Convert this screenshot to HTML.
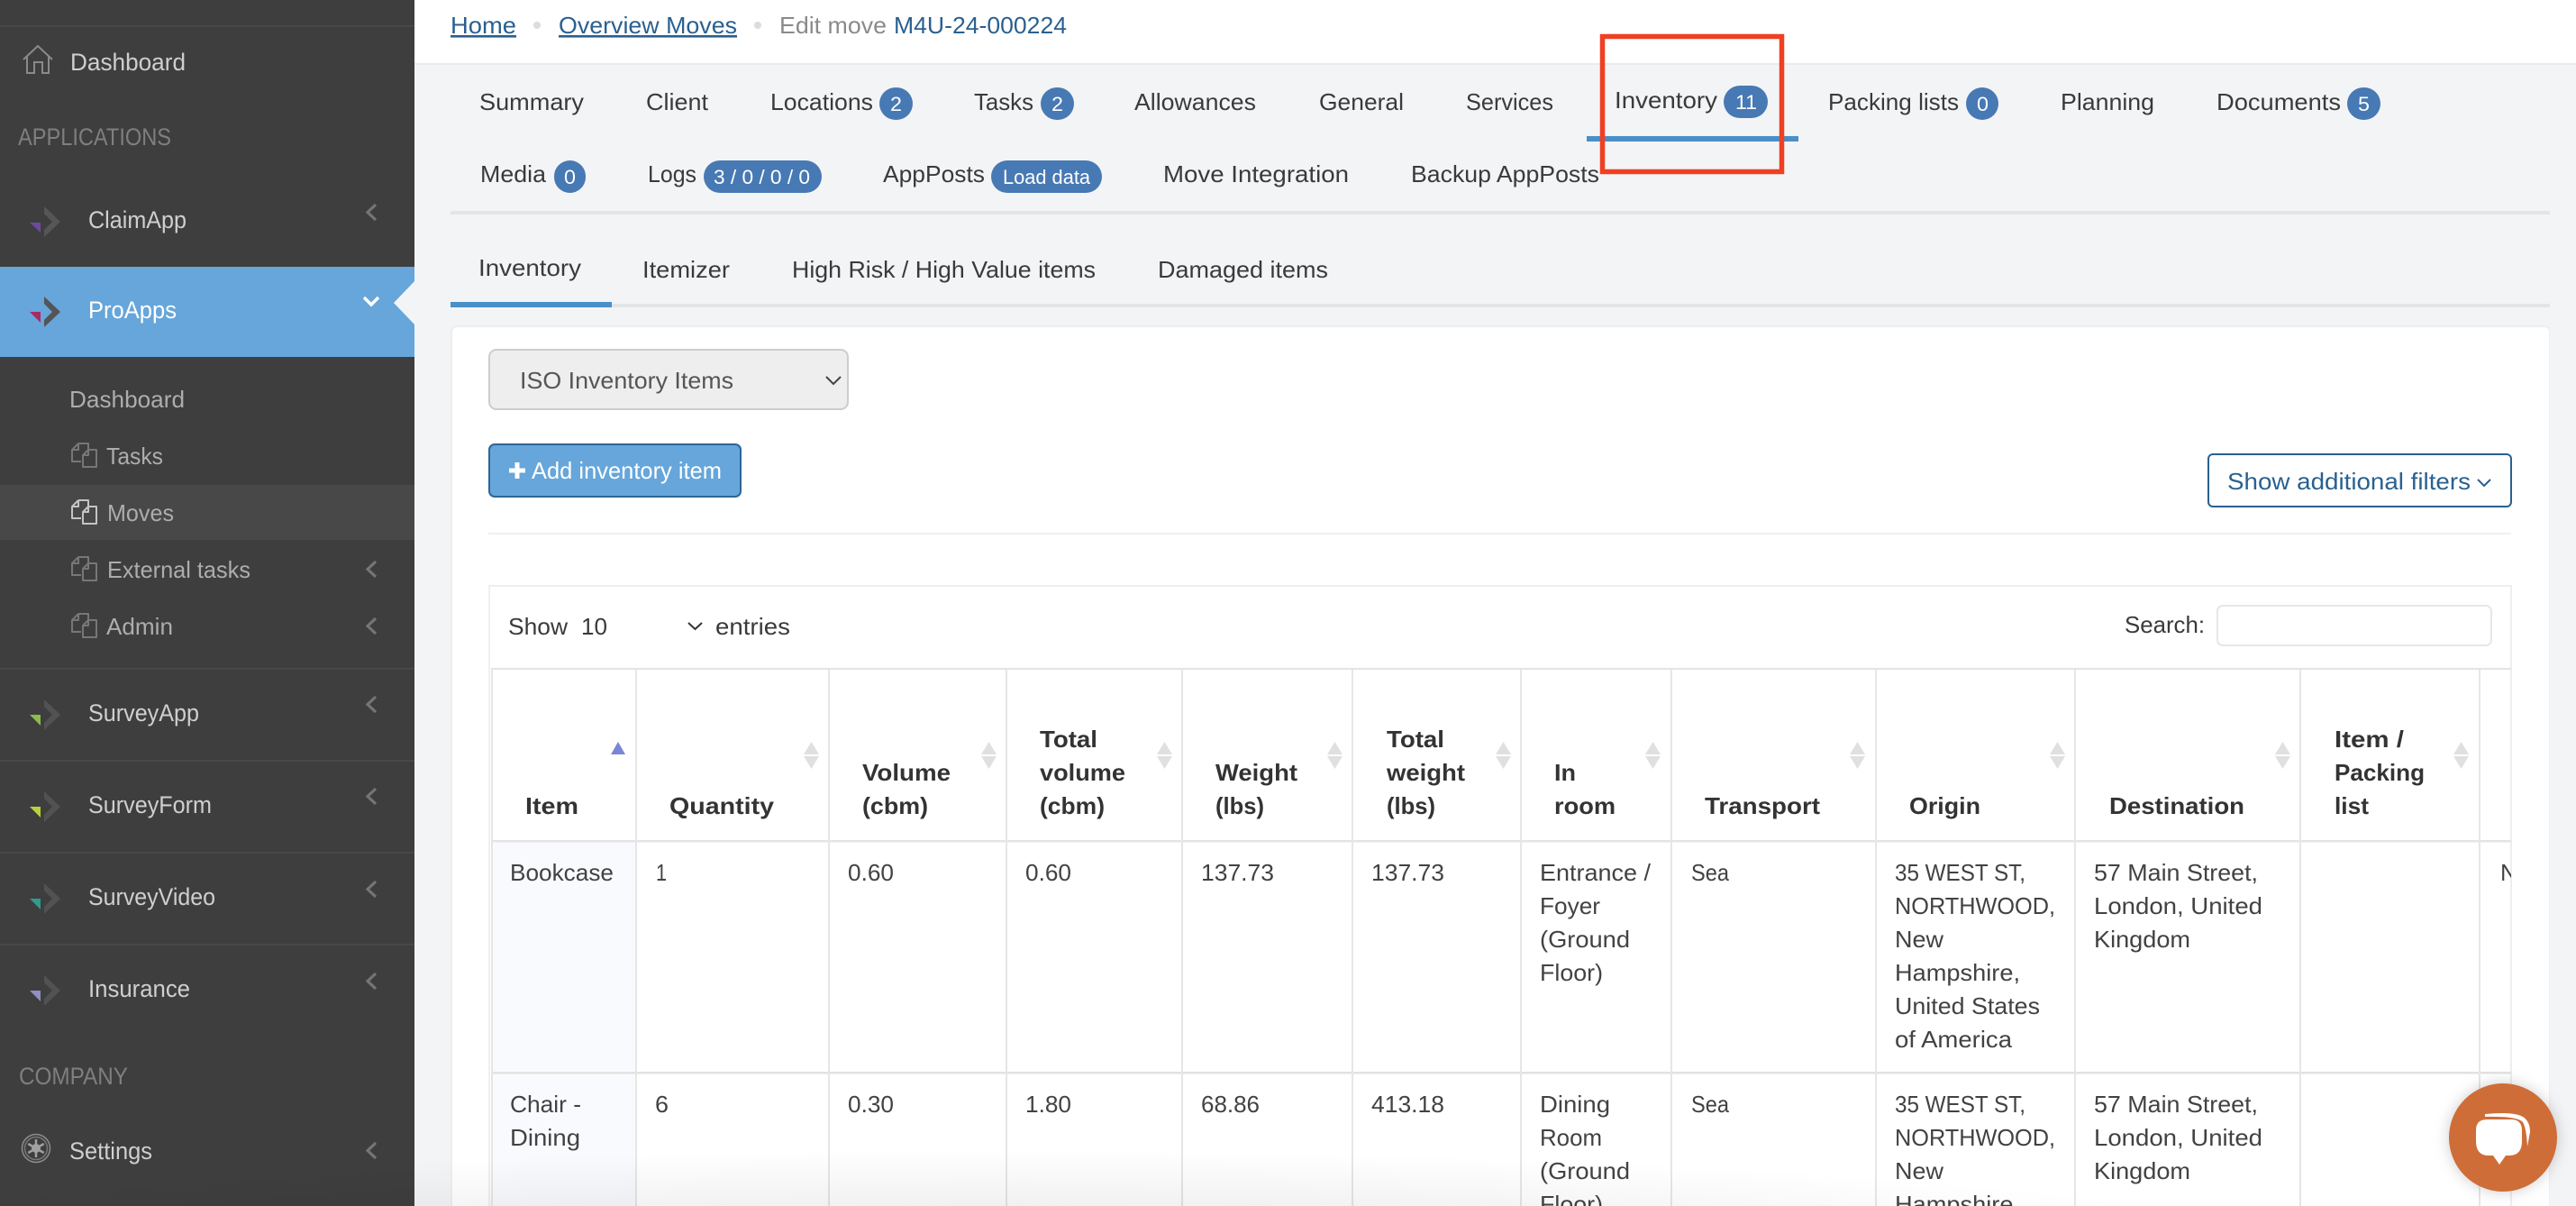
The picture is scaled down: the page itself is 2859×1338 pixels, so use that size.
<!DOCTYPE html>
<html lang="en">
<head>
<meta charset="utf-8">
<title>Edit move</title>
<style>
html,body{margin:0;padding:0;background:#f3f4f6;width:2859px;height:1338px;overflow:hidden}
svg{display:block;position:absolute;left:0;top:0}
text{font-family:"Liberation Sans",sans-serif;font-size:26px;fill:#3a3a3a;white-space:pre}
.sb{font-size:27px;fill:#cfcfcf}
.sub{font-size:26px;fill:#adadad}
.cap{font-size:27px;fill:#7f7f7f}
.lnk{fill:#2a6090}
.bd{font-size:22px;fill:#fff}
.th{font-weight:700;fill:#333;font-size:26px}
.td{fill:#424242}
</style>
</head>
<body>
<svg width="2859" height="1338" viewBox="0 0 2859 1338" xmlns="http://www.w3.org/2000/svg">
<defs>
<g id="doc" fill="none" stroke-width="2" stroke-linejoin="round"><path d="M8 1H19V8M8 1L1 8V21H11M8 1V8H1"/><path d="M19 8H28V27H13V14L19 8ZM19 8V14H13"/></g>
<polyline id="cl" points="11,1 2,9.5 11,18" fill="none" stroke="#757575" stroke-width="3.2"/>
<polygon id="ar" points="49,0 67,17 49,34 49,26 58,17 49,8"/>
<g id="so"><polygon points="8.5,0 17,14 0,14" fill="#e0e0e0"/><polygon points="0,16 17,16 8.5,30" fill="#e0e0e0"/></g>
<radialGradient id="fade" gradientUnits="userSpaceOnUse" cx="0" cy="0" r="1" gradientTransform="translate(1100 1400) scale(1500 125)"><stop offset="0" stop-color="#000" stop-opacity=".11"/><stop offset=".45" stop-color="#000" stop-opacity=".06"/><stop offset="1" stop-color="#000" stop-opacity="0"/></radialGradient>
<clipPath id="tc"><rect x="542" y="650" width="2245" height="688"/></clipPath>
</defs>

<!-- main background -->
<rect width="2859" height="1338" fill="#f3f4f6"/>
<rect x="460" y="0" width="2399" height="70" fill="#fff"/>
<rect x="460" y="70" width="2399" height="2" fill="#e9ebee"/>

<!-- breadcrumb -->
<text x="500" y="37" textLength="73" lengthAdjust="spacingAndGlyphs" class="lnk" text-decoration="underline">Home</text>
<circle cx="596" cy="28" r="4" fill="#dcdcdc"/>
<text x="620" y="37" textLength="198" lengthAdjust="spacingAndGlyphs" class="lnk" text-decoration="underline">Overview Moves</text>
<circle cx="841" cy="28" r="4" fill="#dcdcdc"/>
<text x="865" y="37" textLength="119" lengthAdjust="spacingAndGlyphs" style="fill:#8a8a8a">Edit move</text>
<text x="992" y="37" textLength="192" lengthAdjust="spacingAndGlyphs" class="lnk">M4U-24-000224</text>

<!-- tabs row 1 -->
<text x="532" y="122" textLength="116" lengthAdjust="spacingAndGlyphs">Summary</text>
<text x="717" y="122" textLength="69" lengthAdjust="spacingAndGlyphs">Client</text>
<text x="855" y="122" textLength="114" lengthAdjust="spacingAndGlyphs">Locations</text>
<rect x="976" y="97" width="37" height="36" rx="18" fill="#4779b4"/>
<text x="988" y="123" class="bd" textLength="13" lengthAdjust="spacingAndGlyphs">2</text>
<text x="1081" y="122" textLength="66" lengthAdjust="spacingAndGlyphs">Tasks</text>
<rect x="1155" y="97" width="37" height="36" rx="18" fill="#4779b4"/>
<text x="1167" y="123" class="bd" textLength="13" lengthAdjust="spacingAndGlyphs">2</text>
<text x="1259" y="122" textLength="135" lengthAdjust="spacingAndGlyphs">Allowances</text>
<text x="1464" y="122" textLength="94" lengthAdjust="spacingAndGlyphs">General</text>
<text x="1627" y="122" textLength="97" lengthAdjust="spacingAndGlyphs">Services</text>
<text x="1792" y="120" textLength="114" lengthAdjust="spacingAndGlyphs">Inventory</text>
<rect x="1913" y="95" width="49" height="36" rx="18" fill="#4779b4"/>
<text x="1926" y="121" class="bd" textLength="24" lengthAdjust="spacingAndGlyphs">11</text>
<rect x="1761" y="151" width="235" height="6" fill="#4a8fc7"/>
<text x="2029" y="122" textLength="145" lengthAdjust="spacingAndGlyphs">Packing lists</text>
<rect x="2182" y="97" width="36" height="36" rx="18" fill="#4779b4"/>
<text x="2194" y="123" class="bd" textLength="13" lengthAdjust="spacingAndGlyphs">0</text>
<text x="2287" y="122" textLength="104" lengthAdjust="spacingAndGlyphs">Planning</text>
<text x="2460" y="122" textLength="138" lengthAdjust="spacingAndGlyphs">Documents</text>
<rect x="2605" y="97" width="37" height="36" rx="18" fill="#4779b4"/>
<text x="2617" y="123" class="bd" textLength="13" lengthAdjust="spacingAndGlyphs">5</text>

<!-- tabs row 2 -->
<text x="533" y="202" textLength="73" lengthAdjust="spacingAndGlyphs">Media</text>
<rect x="615" y="178" width="35" height="36" rx="17.5" fill="#4779b4"/>
<text x="626" y="204" class="bd" textLength="13" lengthAdjust="spacingAndGlyphs">0</text>
<text x="719" y="202" textLength="54" lengthAdjust="spacingAndGlyphs">Logs</text>
<rect x="781" y="178" width="131" height="36" rx="18" fill="#4779b4"/>
<text x="792" y="204" class="bd" textLength="107" lengthAdjust="spacingAndGlyphs">3 / 0 / 0 / 0</text>
<text x="980" y="202" textLength="113" lengthAdjust="spacingAndGlyphs">AppPosts</text>
<rect x="1100" y="178" width="123" height="36" rx="18" fill="#4779b4"/>
<text x="1113" y="204" class="bd" textLength="97" lengthAdjust="spacingAndGlyphs">Load data</text>
<text x="1291" y="202" textLength="206" lengthAdjust="spacingAndGlyphs">Move Integration</text>
<text x="1566" y="202" textLength="209" lengthAdjust="spacingAndGlyphs">Backup AppPosts</text>
<rect x="500" y="234" width="2330" height="4" fill="#e4e5e8"/>

<!-- subtabs -->
<text x="531" y="306" textLength="114" lengthAdjust="spacingAndGlyphs">Inventory</text>
<text x="713" y="308" textLength="97" lengthAdjust="spacingAndGlyphs">Itemizer</text>
<text x="879" y="308" textLength="337" lengthAdjust="spacingAndGlyphs">High Risk / High Value items</text>
<text x="1285" y="308" textLength="189" lengthAdjust="spacingAndGlyphs">Damaged items</text>
<rect x="500" y="337" width="2330" height="4" fill="#e2e5e6"/>
<rect x="500" y="335" width="179" height="6" fill="#4a8fc7"/>

<!-- card -->
<path d="M500 1338V368Q500 361 507 361H2823Q2830 361 2830 368V1338Z" fill="#eceef1"/>
<path d="M502 1338V369Q502 363 508 363H2823Q2829 363 2829 369V1338Z" fill="#fff"/>

<!-- select -->
<rect x="543" y="388" width="398" height="66" rx="8" fill="#eeeeee" stroke="#cdcdcd" stroke-width="2"/>
<text x="577" y="431" textLength="237" lengthAdjust="spacingAndGlyphs" style="fill:#555">ISO Inventory Items</text>
<polyline points="917,418 925,426 933,418" fill="none" stroke="#444" stroke-width="2"/>

<!-- add button -->
<rect x="543" y="493" width="279" height="58" rx="6" fill="#66a6da" stroke="#2f6596" stroke-width="2"/>
<path d="M565 522H583M574 513V531" stroke="#fff" stroke-width="5" fill="none"/>
<text x="590" y="531" textLength="211" lengthAdjust="spacingAndGlyphs" style="fill:#fff">Add inventory item</text>

<!-- filters button -->
<rect x="2451" y="504" width="336" height="58" rx="5" fill="#fff" stroke="#2a6090" stroke-width="2"/>
<text x="2472" y="543" textLength="270" lengthAdjust="spacingAndGlyphs" class="lnk">Show additional filters</text>
<polyline points="2750,532 2757,539 2764,532" fill="none" stroke="#2a6090" stroke-width="2"/>

<rect x="542" y="591" width="2245" height="2" fill="#eff0f3"/>

<!-- table wrapper -->
<rect x="542" y="649" width="2245" height="2" fill="#eceef1"/>
<rect x="542" y="649" width="2" height="689" fill="#eef0f3"/>
<rect x="2786" y="649" width="2" height="689" fill="#eceef1"/>
<text x="564" y="704" textLength="66" lengthAdjust="spacingAndGlyphs">Show</text>
<text x="645" y="704" textLength="29" lengthAdjust="spacingAndGlyphs">10</text>
<polyline points="764,691 771.500,698 779,691" fill="none" stroke="#333" stroke-width="2"/>
<text x="794" y="704" textLength="83" lengthAdjust="spacingAndGlyphs">entries</text>
<text x="2358" y="702" textLength="89" lengthAdjust="spacingAndGlyphs">Search:</text>
<rect x="2461" y="672" width="304" height="44" rx="6" fill="#fff" stroke="#e5e7ea" stroke-width="2"/>

<!-- table -->
<g clip-path="url(#tc)">
<rect x="546" y="934" width="160" height="404" fill="#f9fafd"/>
<rect x="545" y="741" width="2242" height="2" fill="#e4e4e4"/>
<rect x="545" y="932" width="2242" height="2.500" fill="#e4e4e4"/>
<rect x="545" y="1189" width="2242" height="2.500" fill="#e2e2e2"/>
<g fill="#e6e6e6">
<rect x="545" y="743" width="2" height="595"/><rect x="705" y="743" width="2" height="595"/><rect x="919" y="743" width="2" height="595"/><rect x="1116" y="743" width="2" height="595"/><rect x="1311" y="743" width="2" height="595"/><rect x="1500" y="743" width="2" height="595"/><rect x="1687" y="743" width="2" height="595"/><rect x="1854" y="743" width="2" height="595"/><rect x="2081" y="743" width="2" height="595"/><rect x="2302" y="743" width="2" height="595"/><rect x="2552" y="743" width="2" height="595"/><rect x="2751" y="743" width="2" height="595"/>
</g>

<!-- header -->
<text class="th" x="583" y="903" textLength="59" lengthAdjust="spacingAndGlyphs">Item</text>
<text class="th" x="743" y="903" textLength="116" lengthAdjust="spacingAndGlyphs">Quantity</text>
<text class="th" x="957" y="866" textLength="98" lengthAdjust="spacingAndGlyphs">Volume</text>
<text class="th" x="957" y="903" textLength="73" lengthAdjust="spacingAndGlyphs">(cbm)</text>
<text class="th" x="1154" y="829" textLength="64" lengthAdjust="spacingAndGlyphs">Total</text>
<text class="th" x="1154" y="866" textLength="95" lengthAdjust="spacingAndGlyphs">volume</text>
<text class="th" x="1154" y="903" textLength="72" lengthAdjust="spacingAndGlyphs">(cbm)</text>
<text class="th" x="1349" y="866" textLength="91" lengthAdjust="spacingAndGlyphs">Weight</text>
<text class="th" x="1349" y="903" textLength="54" lengthAdjust="spacingAndGlyphs">(lbs)</text>
<text class="th" x="1539" y="829" textLength="64" lengthAdjust="spacingAndGlyphs">Total</text>
<text class="th" x="1539" y="866" textLength="87" lengthAdjust="spacingAndGlyphs">weight</text>
<text class="th" x="1539" y="903" textLength="54" lengthAdjust="spacingAndGlyphs">(lbs)</text>
<text class="th" x="1725" y="866" textLength="24" lengthAdjust="spacingAndGlyphs">In</text>
<text class="th" x="1725" y="903" textLength="68" lengthAdjust="spacingAndGlyphs">room</text>
<text class="th" x="1892" y="903" textLength="128" lengthAdjust="spacingAndGlyphs">Transport</text>
<text class="th" x="2119" y="903" textLength="79" lengthAdjust="spacingAndGlyphs">Origin</text>
<text class="th" x="2341" y="903" textLength="150" lengthAdjust="spacingAndGlyphs">Destination</text>
<text class="th" x="2591" y="829" textLength="77" lengthAdjust="spacingAndGlyphs">Item /</text>
<text class="th" x="2591" y="866" textLength="100" lengthAdjust="spacingAndGlyphs">Packing</text>
<text class="th" x="2591" y="903" textLength="38" lengthAdjust="spacingAndGlyphs">list</text>

<!-- sort arrows -->
<polygon points="686,823 694,837 678,837" fill="#7b85d6"/>
<use href="#so" x="892" y="823"/><use href="#so" x="1089" y="823"/><use href="#so" x="1284" y="823"/><use href="#so" x="1473" y="823"/><use href="#so" x="1660" y="823"/><use href="#so" x="1826" y="823"/><use href="#so" x="2053" y="823"/><use href="#so" x="2275" y="823"/><use href="#so" x="2525" y="823"/><use href="#so" x="2723" y="823"/>

<!-- row 1 -->
<text class="td" x="566" y="977" textLength="115" lengthAdjust="spacingAndGlyphs">Bookcase</text>
<text class="td" x="728" y="977" textLength="12" lengthAdjust="spacingAndGlyphs">1</text>
<text class="td" x="941" y="977" textLength="51" lengthAdjust="spacingAndGlyphs">0.60</text>
<text class="td" x="1138" y="977" textLength="51" lengthAdjust="spacingAndGlyphs">0.60</text>
<text class="td" x="1333" y="977" textLength="81" lengthAdjust="spacingAndGlyphs">137.73</text>
<text class="td" x="1522" y="977" textLength="81" lengthAdjust="spacingAndGlyphs">137.73</text>
<text class="td" x="1709" y="977" textLength="123" lengthAdjust="spacingAndGlyphs">Entrance /</text>
<text class="td" x="1709" y="1014" textLength="67" lengthAdjust="spacingAndGlyphs">Foyer</text>
<text class="td" x="1709" y="1051" textLength="100" lengthAdjust="spacingAndGlyphs">(Ground</text>
<text class="td" x="1709" y="1088" textLength="70" lengthAdjust="spacingAndGlyphs">Floor)</text>
<text class="td" x="1877" y="977" textLength="42" lengthAdjust="spacingAndGlyphs">Sea</text>
<text class="td" x="2103" y="977" textLength="145" lengthAdjust="spacingAndGlyphs">35 WEST ST,</text>
<text class="td" x="2103" y="1014" textLength="178" lengthAdjust="spacingAndGlyphs">NORTHWOOD,</text>
<text class="td" x="2103" y="1051" textLength="54" lengthAdjust="spacingAndGlyphs">New</text>
<text class="td" x="2103" y="1088" textLength="139" lengthAdjust="spacingAndGlyphs">Hampshire,</text>
<text class="td" x="2103" y="1125" textLength="161" lengthAdjust="spacingAndGlyphs">United States</text>
<text class="td" x="2103" y="1162" textLength="130" lengthAdjust="spacingAndGlyphs">of America</text>
<text class="td" x="2324" y="977" textLength="182" lengthAdjust="spacingAndGlyphs">57 Main Street,</text>
<text class="td" x="2324" y="1014" textLength="187" lengthAdjust="spacingAndGlyphs">London, United</text>
<text class="td" x="2324" y="1051" textLength="107" lengthAdjust="spacingAndGlyphs">Kingdom</text>
<text class="td" x="2775" y="977">N</text>

<!-- row 2 -->
<text class="td" x="566" y="1234" textLength="79" lengthAdjust="spacingAndGlyphs">Chair -</text>
<text class="td" x="566" y="1271" textLength="78" lengthAdjust="spacingAndGlyphs">Dining</text>
<text class="td" x="727" y="1234" textLength="15" lengthAdjust="spacingAndGlyphs">6</text>
<text class="td" x="941" y="1234" textLength="51" lengthAdjust="spacingAndGlyphs">0.30</text>
<text class="td" x="1138" y="1234" textLength="51" lengthAdjust="spacingAndGlyphs">1.80</text>
<text class="td" x="1333" y="1234" textLength="65" lengthAdjust="spacingAndGlyphs">68.86</text>
<text class="td" x="1522" y="1234" textLength="81" lengthAdjust="spacingAndGlyphs">413.18</text>
<text class="td" x="1709" y="1234" textLength="78" lengthAdjust="spacingAndGlyphs">Dining</text>
<text class="td" x="1709" y="1271" textLength="69" lengthAdjust="spacingAndGlyphs">Room</text>
<text class="td" x="1709" y="1308" textLength="100" lengthAdjust="spacingAndGlyphs">(Ground</text>
<text class="td" x="1709" y="1345" textLength="70" lengthAdjust="spacingAndGlyphs">Floor)</text>
<text class="td" x="1877" y="1234" textLength="42" lengthAdjust="spacingAndGlyphs">Sea</text>
<text class="td" x="2103" y="1234" textLength="145" lengthAdjust="spacingAndGlyphs">35 WEST ST,</text>
<text class="td" x="2103" y="1271" textLength="178" lengthAdjust="spacingAndGlyphs">NORTHWOOD,</text>
<text class="td" x="2103" y="1308" textLength="54" lengthAdjust="spacingAndGlyphs">New</text>
<text class="td" x="2103" y="1345" textLength="139" lengthAdjust="spacingAndGlyphs">Hampshire,</text>
<text class="td" x="2324" y="1234" textLength="182" lengthAdjust="spacingAndGlyphs">57 Main Street,</text>
<text class="td" x="2324" y="1271" textLength="187" lengthAdjust="spacingAndGlyphs">London, United</text>
<text class="td" x="2324" y="1308" textLength="107" lengthAdjust="spacingAndGlyphs">Kingdom</text>
</g>

<!-- red annotation -->
<rect x="1778.500" y="40.500" width="199" height="150" fill="none" stroke="#ee4023" stroke-width="5.500"/>

<!-- sidebar -->
<rect x="0" y="0" width="460" height="1338" fill="#3e3e3e"/>
<rect x="0" y="28" width="460" height="2" fill="#484848"/>
<path d="M26 66 L42 51 L58 66" fill="none" stroke="#8a8a8a" stroke-width="2"/>
<path d="M30 62 V81 H38 V69 H47 V81 H54 V62" fill="none" stroke="#8a8a8a" stroke-width="2"/>
<text class="sb" x="78" y="78" textLength="128" lengthAdjust="spacingAndGlyphs">Dashboard</text>
<text class="cap" x="20" y="161" textLength="170" lengthAdjust="spacingAndGlyphs">APPLICATIONS</text>

<use href="#ar" y="229" fill="#565656"/>
<polygon points="33,247 45,247 45,258" fill="#6b4a9e"/>
<text class="sb" x="98" y="253" textLength="109" lengthAdjust="spacingAndGlyphs">ClaimApp</text>
<use href="#cl" x="406" y="226"/>

<rect x="0" y="296" width="460" height="100" fill="#66a6da"/>
<polygon points="437,336 460,312 460,360" fill="#f3f4f6"/>
<use href="#ar" y="329" fill="#555"/>
<polygon points="33,346 45,346 45,358" fill="#a82b5f"/>
<text class="sb" x="98" y="353" textLength="98" lengthAdjust="spacingAndGlyphs" style="fill:#fff">ProApps</text>
<polyline points="404,330 412,338 420,330" fill="none" stroke="#fff" stroke-width="3.500"/>

<text class="sub" x="77" y="452" textLength="128" lengthAdjust="spacingAndGlyphs">Dashboard</text>
<use href="#doc" x="79" y="491" stroke="#777"/>
<text class="sub" x="118" y="515" textLength="63" lengthAdjust="spacingAndGlyphs">Tasks</text>
<rect x="0" y="538" width="460" height="61" fill="#484848"/>
<use href="#doc" x="79" y="554" stroke="#c4c4c4"/>
<text class="sub" x="119" y="578" textLength="74" lengthAdjust="spacingAndGlyphs">Moves</text>
<use href="#doc" x="79" y="617" stroke="#777"/>
<text class="sub" x="119" y="641" textLength="159" lengthAdjust="spacingAndGlyphs">External tasks</text>
<use href="#cl" x="406" y="622"/>
<use href="#doc" x="79" y="680" stroke="#777"/>
<text class="sub" x="118" y="704" textLength="74" lengthAdjust="spacingAndGlyphs">Admin</text>
<use href="#cl" x="406" y="685"/>

<rect x="0" y="741" width="460" height="2" fill="#484848"/>
<use href="#ar" y="776" fill="#525252"/>
<polygon points="33,793 45,793 45,805" fill="#8cbb4f"/>
<text class="sb" x="98" y="800" textLength="123" lengthAdjust="spacingAndGlyphs">SurveyApp</text>
<use href="#cl" x="406" y="772"/>

<rect x="0" y="843" width="460" height="2" fill="#484848"/>
<use href="#ar" y="878" fill="#525252"/>
<polygon points="33,895 45,895 45,907" fill="#bcd03e"/>
<text class="sb" x="98" y="902" textLength="137" lengthAdjust="spacingAndGlyphs">SurveyForm</text>
<use href="#cl" x="406" y="874"/>

<rect x="0" y="945" width="460" height="2" fill="#484848"/>
<use href="#ar" y="980" fill="#525252"/>
<polygon points="33,997 45,997 45,1009" fill="#33998c"/>
<text class="sb" x="98" y="1004" textLength="141" lengthAdjust="spacingAndGlyphs">SurveyVideo</text>
<use href="#cl" x="406" y="977"/>

<rect x="0" y="1047" width="460" height="2" fill="#484848"/>
<use href="#ar" y="1082" fill="#525252"/>
<polygon points="33,1099 45,1099 45,1111" fill="#8f8fc0"/>
<text class="sb" x="98" y="1106" textLength="113" lengthAdjust="spacingAndGlyphs">Insurance</text>
<use href="#cl" x="406" y="1079"/>

<text class="cap" x="21" y="1203" textLength="121" lengthAdjust="spacingAndGlyphs">COMPANY</text>

<circle cx="40" cy="1274" r="15.500" fill="none" stroke="#8c8c8c" stroke-width="1.500"/>
<circle cx="40" cy="1274" r="12.500" fill="none" stroke="#777" stroke-width="1.500"/>
<path d="M40 1264V1284M31.300 1269L48.700 1279M31.300 1279L48.700 1269" stroke="#a0a0a0" stroke-width="2.500"/>
<circle cx="40" cy="1274" r="5" fill="#a0a0a0"/>
<text class="sb" x="77" y="1286" textLength="92" lengthAdjust="spacingAndGlyphs">Settings</text>
<use href="#cl" x="406" y="1267"/>

<!-- bottom fade -->
<rect x="0" y="1270" width="2859" height="68" fill="url(#fade)"/>

<!-- chat -->
<circle cx="2778" cy="1262" r="60" fill="#cf6d38" style="filter:drop-shadow(0 0 8px rgba(0,0,0,.2))"/>
<path d="M2760 1242 H2787 Q2799 1242 2799 1254 V1266 Q2799 1282 2785 1282 H2781 L2774 1292 L2767 1282 H2762 Q2748 1282 2748 1266 V1254 Q2748 1242 2760 1242 Z" fill="#fff"/>
<path d="M2758 1236 Q2790 1233 2800 1239 Q2808 1244 2808 1256 L2805 1272 Q2804 1252 2800 1245 Q2794 1238 2758 1239 Z" fill="#fff"/>
</svg>
</body>
</html>
